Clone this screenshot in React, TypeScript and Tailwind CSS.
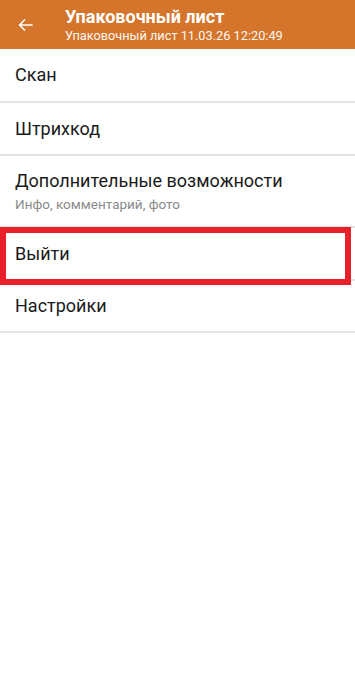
const font = { fontFamily: "Roboto, 'Noto Sans', sans-serif" };

function Row({ title, subtitle, h }: { title: string; subtitle?: string; h: string }) {
  return (
    <div className={`flex flex-col justify-center px-[15px] border-b-2 border-[#e4e4e4] ${h}`}>
      <div className="text-[18px] leading-[22px] text-[#1a1a1a]">{title}</div>
      {subtitle && <div className="text-[13.5px] leading-[18px] text-[#8a8a8a] mt-[3px]">{subtitle}</div>}
    </div>
  );
}

export default function App() {
  return (
    <div className="w-[355px] h-[674px] bg-white" style={font}>
      <div className="h-[49px] bg-[#d4752b] flex items-center">
        <div className="w-[65px] flex justify-start pl-[18px]">
          <svg width="15" height="12" viewBox="0 0 15 12" fill="none" stroke="white" strokeWidth="1.7" strokeLinecap="round" strokeLinejoin="round">
            <path d="M14 6H1.5M6.5 1L1.5 6l5 5" />
          </svg>
        </div>
        <div className="flex flex-col text-white">
          <div className="text-[18px] leading-[22px] font-bold">Упаковочный лист</div>
          <div className="text-[12.75px] leading-[16px] opacity-95">Упаковочный лист 11.03.26 12:20:49</div>
        </div>
      </div>
      <Row title="Скан" h="h-[54px]" />
      <Row title="Штрихкод" h="h-[53px]" />
      <Row title="Дополнительные возможности" subtitle="Инфо, комментарий, фото" h="h-[72px]" />
      <div className="relative">
        <Row title="Выйти" h="h-[53px]" />
        <div className="absolute left-0 right-[4px] top-[-1px] bottom-[-4px] border-[6px] border-[#e8202c]" />
      </div>
      <Row title="Настройки" h="h-[52px]" />
    </div>
  );
}
